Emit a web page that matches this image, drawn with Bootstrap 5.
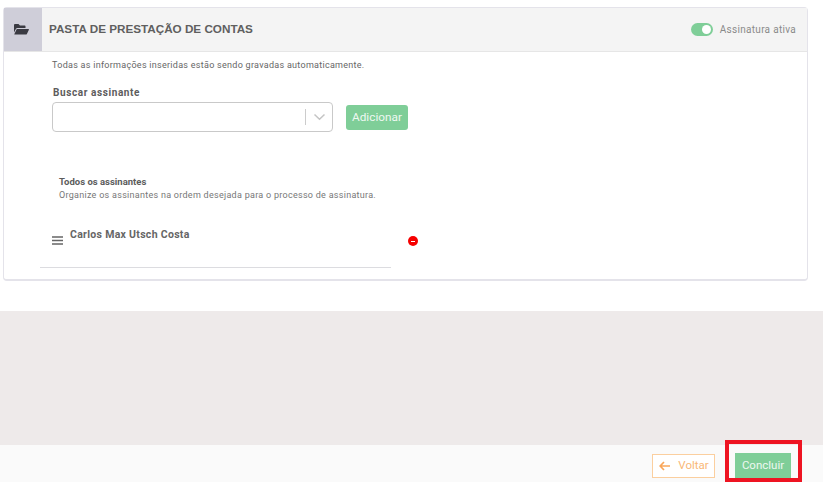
<!DOCTYPE html>
<html lang="pt">
<head>
<meta charset="utf-8">
<title>Pasta de prestação de contas</title>
<link href="https://cdn.jsdelivr.net/npm/bootstrap@5.3.0/dist/css/bootstrap.min.css" rel="stylesheet">
<style>
html,body{height:494px;overflow:hidden;background:#fff}
body{font-family:Roboto,"Liberation Sans",sans-serif;color:#666;position:relative}
.page-top{height:311px;padding:7px 15px 0 3px}
.folder-card{height:274px;border:1px solid #e4e3ea;border-bottom-width:2px;border-radius:4px;background:#fff}
.folder-head{height:44px;background:#f4f4f4;border-bottom:1px solid #e6e6e6}
.folder-ico{width:38px;background:#cfced9}
.folder-ico svg{margin-right:3px}
.folder-title{font-family:"Liberation Sans",sans-serif;font-weight:700;font-size:11.7px;color:#5f5f5f;margin:0 0 2px 7px}
.sign-toggle{width:22px;height:13px;border-radius:7px;background:#7fce98;padding-right:2px}
.sign-toggle i{display:block;width:9px;height:9px;border-radius:50%;background:#fff}
.sign-text{font-size:10px;letter-spacing:.3px;color:#8a8a8a;margin:0 11px 0 7px}
.folder-body{padding:0 0 0 48px}
.auto-note{font-size:9px;letter-spacing:.28px;color:#666;line-height:12px;margin-top:7px}
.find-label{font-size:10px;font-weight:700;letter-spacing:.6px;color:#5c5c5c;line-height:12px;margin:16px 0 3px 1px}
.find-box{width:281px;height:30px;border:1px solid #c9c9c9;border-radius:4px;padding-right:6px}
.find-sep{width:1px;height:16px;background:#ccc;margin-right:7px}
.btn-add{background:#7fce98;color:#eef8f1;font-size:11.8px;padding:0 6px;height:25px;line-height:25px;border:0;border-radius:3px;margin-left:13px}
.all-block{padding-left:7px;margin-top:43px}
.all-title{font-size:9.5px;font-weight:700;color:#5c5c5c;line-height:14px}
.all-note{font-size:9px;letter-spacing:.28px;color:#777;line-height:13px}
.signer-row{width:351px;height:40px;margin:26px 0 0 -19px;border-bottom:1px solid #dcdce0;padding-left:12px}
.signer-name{font-size:10.5px;font-weight:700;letter-spacing:.3px;color:#666;line-height:13px;margin-left:7px}
.drag-ico{margin-top:8px}
.minus-dot{width:10px;height:10px;border-radius:50%;background:#f60000;margin:34px 0 0 17px}
.minus-dot i{display:block;width:4px;height:1px;background:#fff}
.grey-band{height:134px;background:#eeeaea}
.foot-bar{height:37px;background:#fafafa;padding:8px 32px 0 0}
.btn-back{height:24px;width:63px;margin-top:1px;border:1px solid #fbcf9f;color:#f9b877;background:#fff;border-radius:0;font-size:11.5px;padding:0 0 0 1px}
.btn-end{height:25px;width:56px;background:#7fce98;color:#eef8f1;border:0;border-radius:0;font-size:11.5px;padding:0;margin-left:20px}
.red-mark{position:absolute;left:725px;top:440px;width:77px;height:42px;border:4px solid #ee1422;pointer-events:none}
</style>
</head>
<body>
<div class="page-top">
  <div class="folder-card">
    <div class="folder-head d-flex align-items-stretch">
      <div class="folder-ico d-flex align-items-center justify-content-center">
        <svg width="15" height="11" viewBox="0 0 15 11"><path d="M0 1.2C0 .5.5 0 1.2 0h3.3l1.5 1.6h4.5c.6 0 1 .4 1 1V4H3.4c-.6 0-1.1.3-1.4.8L0 8.6z" fill="#3a3a42"/><path d="M3.1 5h11.3c.4 0 .7.4.5.8l-2 4.1c-.2.4-.6.7-1.1.7H.8c-.4 0-.6-.4-.4-.7l1.9-3.9c.2-.6.4-1 .8-1z" fill="#3a3a42"/></svg>
      </div>
      <div class="folder-title align-self-center">PASTA DE PRESTAÇÃO DE CONTAS</div>
      <div class="ms-auto d-flex align-items-center">
        <span class="sign-toggle d-flex align-items-center justify-content-end"><i></i></span>
        <span class="sign-text">Assinatura ativa</span>
      </div>
    </div>
    <div class="folder-body">
      <div class="auto-note">Todas as informações inseridas estão sendo gravadas automaticamente.</div>
      <div class="find-label">Buscar assinante</div>
      <div class="d-flex align-items-center">
        <div class="find-box d-flex align-items-center justify-content-end">
          <span class="find-sep"></span>
          <svg width="13" height="8" viewBox="0 0 13 8"><path d="M1.5 1.5 6.5 6.2l5-4.7" fill="none" stroke="#c4c4c4" stroke-width="1.5"/></svg>
        </div>
        <button type="button" class="btn btn-add">Adicionar</button>
      </div>
      <div class="all-block">
        <div class="all-title">Todos os assinantes</div>
        <div class="all-note">Organize os assinantes na ordem desejada para o processo de assinatura.</div>
        <div class="d-flex align-items-start">
          <div class="signer-row d-flex align-items-start">
            <svg class="drag-ico" width="11" height="9" viewBox="0 0 11 9"><path d="M0 1h11M0 4.5h11M0 8h11" stroke="#666" stroke-width="1.4"/></svg>
            <div class="signer-name">Carlos Max Utsch Costa</div>
          </div>
          <div class="minus-dot d-flex align-items-center justify-content-center"><i></i></div>
        </div>
      </div>
    </div>
  </div>
</div>
<div class="grey-band"></div>
<div class="foot-bar d-flex justify-content-end align-items-start">
  <button type="button" class="btn btn-back d-flex align-items-center justify-content-center gap-2">
    <svg width="11" height="10" viewBox="0 0 11 10"><path d="M5 1 1.2 5 5 9M1.2 5H11" fill="none" stroke="#f9a65a" stroke-width="1.7"/></svg>
    <span>Voltar</span>
  </button>
  <button type="button" class="btn btn-end">Concluir</button>
</div>
<div class="red-mark"></div>
<script src="https://cdn.jsdelivr.net/npm/bootstrap@5.3.0/dist/js/bootstrap.bundle.min.js"></script>
</body>
</html>
